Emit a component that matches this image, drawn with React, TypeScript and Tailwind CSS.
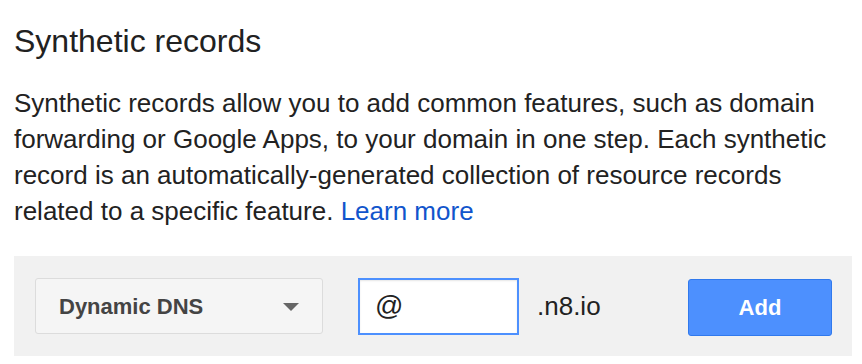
export default function App() {
  return (
    <div className="w-[862px] h-[364px] bg-white px-[14px] pt-[21px] text-[#222] font-['Liberation_Sans',Arial,sans-serif]">
      <h2 className="text-[32px] leading-[40px] font-normal text-[#212121]">Synthetic records</h2>

      <p className="mt-[24px] w-[838px] text-[26px] leading-[36px]">
        <span>
          Synthetic records allow you to add common features, such as domain forwarding or Google Apps, to your
          domain in one step. Each synthetic record is an automatically-generated collection of resource records
          related to a specific feature.
        </span>{" "}
        <a href="#" className="text-[#1155cc]">
          Learn more
        </a>
      </p>

      {/* Add record row */}
      <div className="mt-[27px] w-[838px] h-[100px] bg-[#f1f1f1] flex items-center pl-[21px] pr-[20px]">
        <div className="w-[288px] h-[56px] flex items-center justify-between pl-[23px] pr-[23px] bg-[#f5f5f5] border border-[#dcdcdc] rounded-[3px]">
          <span className="text-[22px] font-bold text-[#444]">Dynamic DNS</span>
          <svg width="16" height="8" viewBox="0 0 16 8" className="mt-[2px]">
            <path d="M0 0 L16 0 L8 8 Z" fill="#666" />
          </svg>
        </div>

        <div className="ml-[35px] w-[161px] h-[57px] flex items-center pl-[15px] bg-white border-2 border-[#4d90fe] shadow-[inset_0_1px_2px_rgba(0,0,0,0.1)]">
          <span className="text-[28px] leading-none">@</span>
        </div>

        <span className="ml-[18px] text-[26px]">.n8.io</span>

        <button className="ml-auto w-[144px] h-[57px] mt-[2px] flex items-center justify-center bg-[#4d90fe] border border-[#3079ed] rounded-[3px] text-white text-[22px] font-bold">
          Add
        </button>
      </div>
    </div>
  )
}
